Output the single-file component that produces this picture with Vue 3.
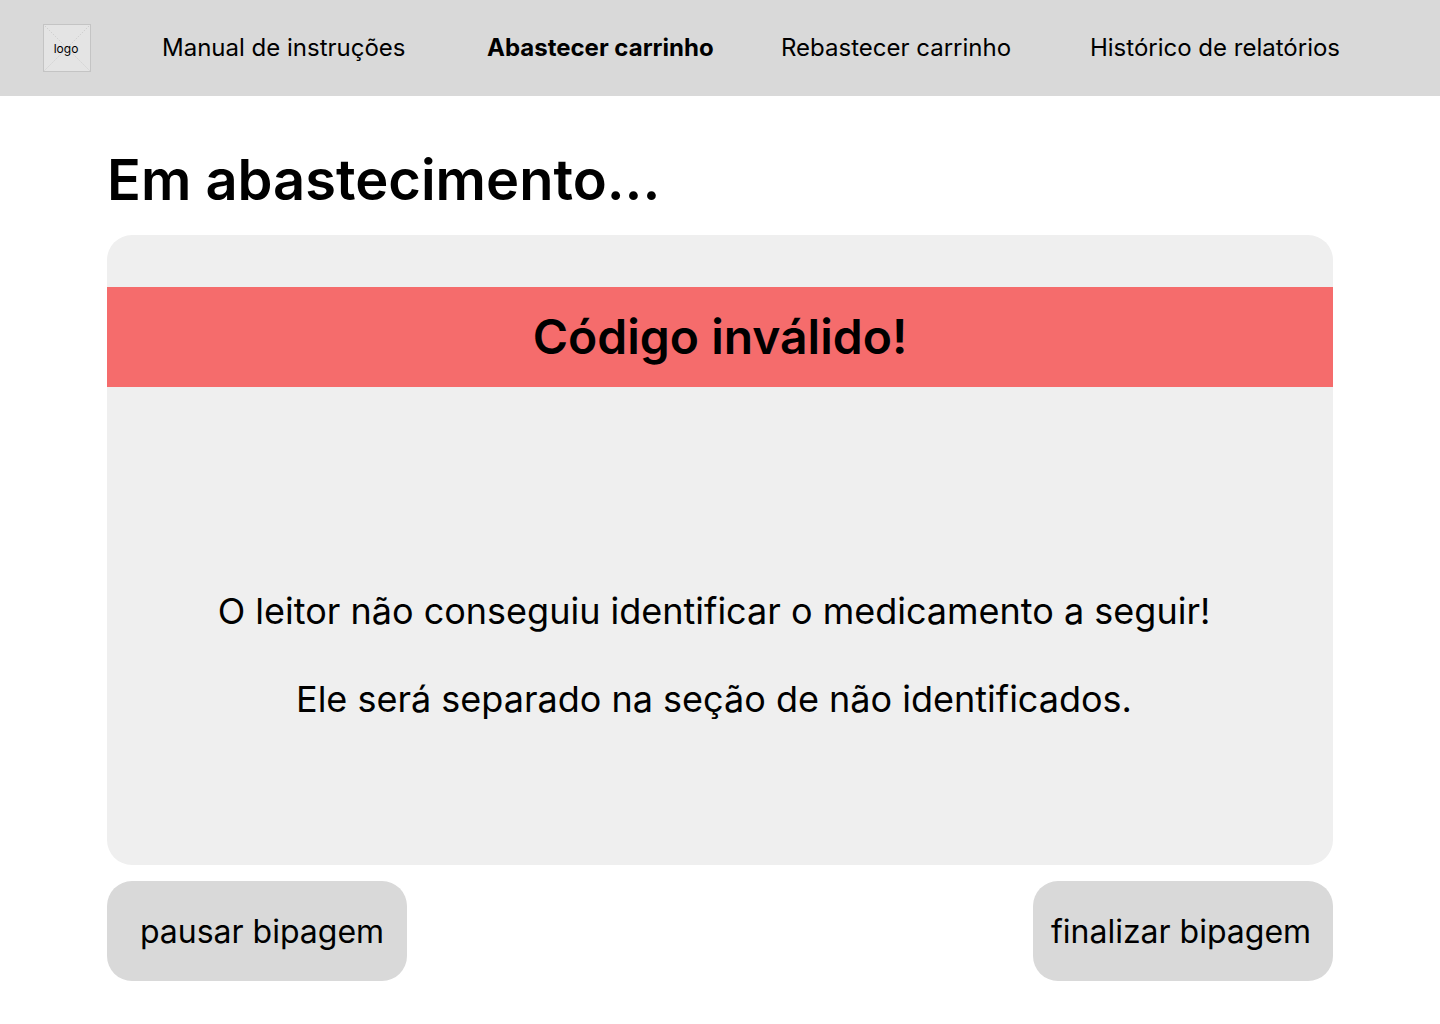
<script setup>
const links = [
  { label: 'Manual de instruções', key: 'manual' },
  { label: 'Abastecer carrinho', key: 'supply', active: true },
  { label: 'Rebastecer carrinho', key: 'resupply' },
  { label: 'Histórico de relatórios', key: 'history' },
]
</script>

<template>
  <header class="topbar">
    <a class="logo" href="#">
      <svg class="logo-frame" viewBox="0 0 48 48" aria-hidden="true">
        <rect x="0.5" y="0.5" width="47" height="47" fill="#e4e4e4" stroke="#c4c4c4" />
        <path d="M0 0L48 48M48 0L0 48" stroke="#c4c4c4" stroke-width="0.7" stroke-dasharray="1.4 1.4" />
      </svg>
      <span class="logo-text">logo</span>
    </a>
    <nav class="nav">
      <a
        v-for="link in links"
        :key="link.key"
        href="#"
        class="nav-link"
        :class="{ active: link.active }"
      >{{ link.label }}</a>
    </nav>
  </header>

  <main class="page">
    <h1 class="title">Em abastecimento...</h1>
    <section class="panel">
      <h2 class="alert">Código inválido!</h2>
      <div class="message">
        <p>O leitor não conseguiu identificar o medicamento a seguir!</p>
        <p>Ele será separado na seção de não identificados.</p>
      </div>
    </section>
    <div class="actions">
      <button type="button" class="action pause">pausar bipagem</button>
      <button type="button" class="action finish">finalizar bipagem</button>
    </div>
  </main>
</template>

<style>
body {
  margin: 0;
  background: #fff;
}
</style>

<style scoped>
.topbar,
.page {
  font-family: Inter, sans-serif;
  color: #000;
}

.topbar {
  display: flex;
  align-items: center;
  box-sizing: border-box;
  height: 96px;
  padding: 0 100px 0 43px;
  background: #d9d9d9;
}

.logo {
  display: grid;
  place-items: center;
  flex: none;
  width: 48px;
  height: 48px;
  margin-right: 71px;
  color: #000;
  text-decoration: none;
}

.logo-frame,
.logo-text {
  grid-area: 1 / 1;
}

.logo-frame {
  width: 48px;
  height: 48px;
}

.logo-text {
  padding: 2px 2px 0 0;
  font-size: 12px;
  line-height: 16px;
}

.nav {
  display: grid;
  flex: 1;
  grid-template-columns: 325fr 294fr 309fr 250fr;
  padding-bottom: 2px;
}

.nav-link {
  color: #000;
  font-size: 24px;
  line-height: 29px;
  text-decoration: none;
  white-space: nowrap;
}

.nav-link.active {
  font-weight: 700;
}

.page {
  padding: 48px 107px 43px;
}

.title {
  margin: 0;
  font-size: 56px;
  font-weight: 600;
  line-height: 72px;
}

.panel {
  margin-top: 19px;
  padding: 52px 0 144px;
  border-radius: 25px;
  background: #efefef;
}

.alert {
  margin: 0;
  background: #f56c6c;
  font-size: 48px;
  font-weight: 600;
  line-height: 100px;
  text-align: center;
}

.message {
  margin-top: 202px;
  padding-right: 12px;
  font-size: 36px;
  line-height: 44px;
  text-align: center;
}

.message p {
  margin: 0;
}

.message p + p {
  margin-top: 44px;
}

.actions {
  display: flex;
  justify-content: space-between;
  margin-top: 16px;
}

.action {
  width: 300px;
  height: 100px;
  padding: 2px 0 0;
  border: 0;
  border-radius: 25px;
  background: #d9d9d9;
  color: #000;
  font: 400 32px/40px Inter, sans-serif;
}

.pause {
  padding-left: 10px;
}

.finish {
  padding-right: 4px;
}
</style>
